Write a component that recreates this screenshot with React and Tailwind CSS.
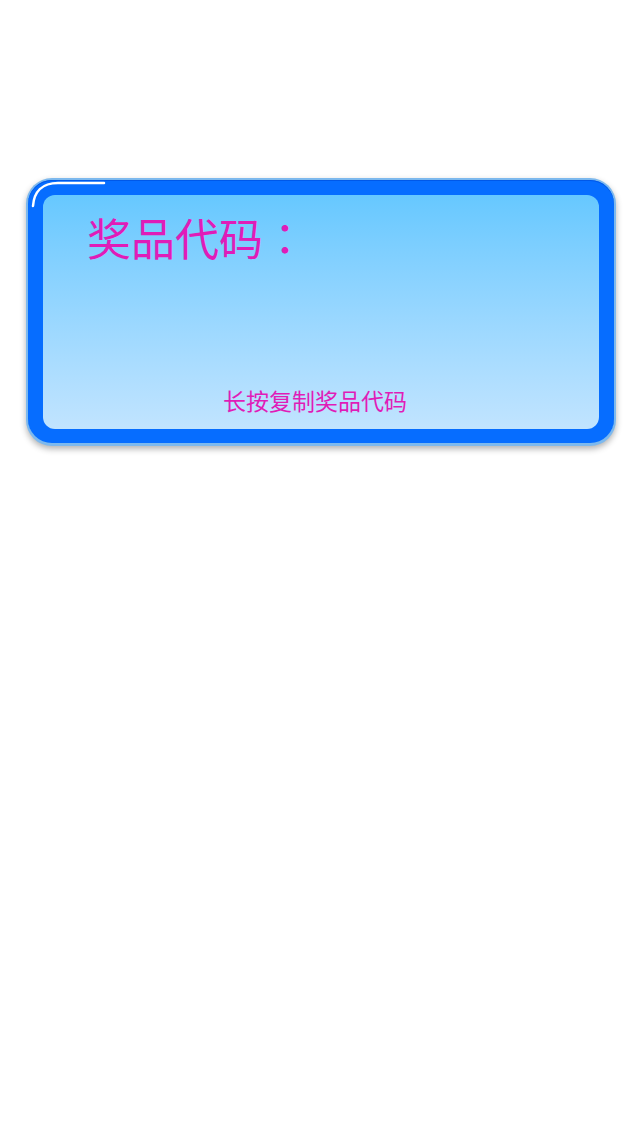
import React from 'react';

const App = () => {
    return (
        <div className="min-h-[1139px] w-[640px] bg-white pt-[178px] font-['Noto_Sans_CJK_SC','Noto_Sans',sans-serif]">
            {/* Prize card */}
            <div className="relative ml-[26px] w-[590px] rounded-[26px] bg-[#7db9ee] p-[2px] pb-[3px] shadow-[0_3px_6px_rgba(0,0,0,0.3)]">
                <div className="rounded-[24px] bg-[#066dff] p-[15px] pb-[14px] shadow-[inset_0_1px_0_#0058e8]">
                    <div className="h-[234px] rounded-[12px] bg-gradient-to-b from-[#66c8ff] to-[#c1e4ff] flex flex-col">
                        <div className="pl-[44px] pt-[12px] text-[44px] leading-[60px] text-[#e01cb8]">
                            奖品代码<span className="font-['Noto_Sans_CJK_TC',sans-serif]">：</span>
                        </div>
                        <div className="mt-auto mb-[14px] pr-[12px] text-center text-[23px] leading-[30px] text-[#e01cb8]">
                            长按复制奖品代码
                        </div>
                    </div>
                </div>
                {/* gloss highlight */}
                <svg className="absolute left-0 top-0" width="90" height="40" viewBox="0 0 90 40">
                    <path d="M7 28 C 8 14, 16 5, 32 5 L 78 5" fill="none" stroke="white" strokeWidth="2.5" strokeLinecap="round" />
                </svg>
            </div>
        </div>
    );
};

export default App;
